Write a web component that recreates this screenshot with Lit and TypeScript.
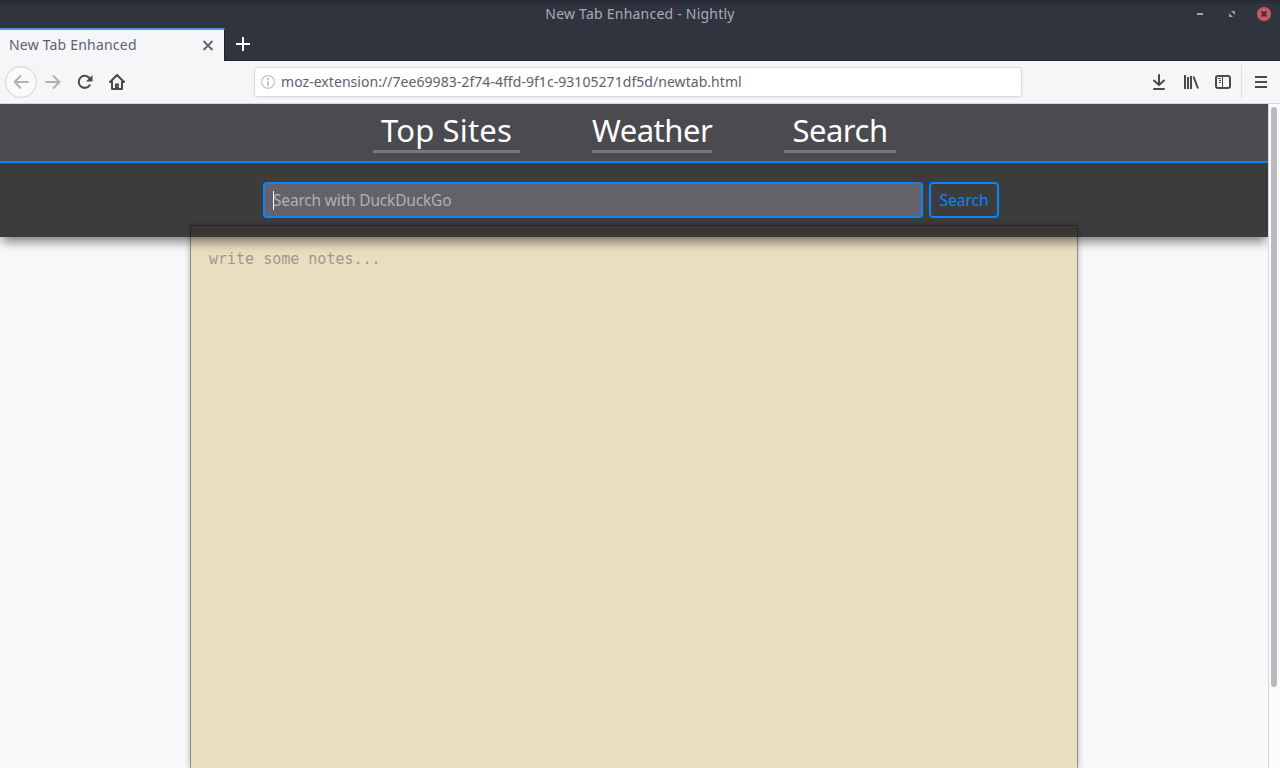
import { LitElement, html, css } from "lit";
import { customElement } from "lit/decorators.js";

@customElement("browser-chrome")
class BrowserChrome extends LitElement {
  static styles = css`
    :host { display: block; height: 104px; flex: none; font-family: "Noto Sans", sans-serif; font-size: 14px; color: #5c616c; }
    * { box-sizing: border-box; }
    svg { display: block; flex: none; }
    .frame { height: 61px; background: linear-gradient(#262934, #2f343f 5px); border-bottom: 1px solid #22252e; display: flex; flex-direction: column; }
    .title { height: 28px; display: grid; grid-template-columns: 1fr auto 1fr; align-items: center; color: #a6adba; flex: none; }
    .title .name { grid-column: 2; letter-spacing: 0.22px; line-height: 28px; }
    .controls { display: flex; justify-content: flex-end; gap: 16px; padding-right: 8px; }
    .tabs { display: flex; height: 33px; }
    .tab { width: 225px; height: 33px; border-top: 2px solid #5294e2; border-right: 1px solid #22252e; background: #f5f6f8; display: flex; align-items: center; padding: 0 8px 0 9px; }
    .tab .label { flex: 1; letter-spacing: 0.2px; padding-bottom: 2px; }
    .plus { padding: 8px 10px; }
    .bar { height: 43px; background: #f5f6f8; border-bottom: 1px solid #d4d6da; display: flex; align-items: center; padding-left: 5px; }
    .back { width: 32px; height: 32px; border: 1px solid #d2d3d5; border-radius: 50%; background: #fafafa; padding: 7px; }
    .nav-icons { display: flex; gap: 16px; padding-left: 8px; }
    .url { margin-left: 129px; width: 768px; height: 30px; border: 1px solid #d8dbe1; border-radius: 3px; background: #fff; box-shadow: 0 1px 3px rgba(0,0,0,.06); display: flex; align-items: center; gap: 6px; padding-left: 6px; white-space: nowrap; }
    .url .text { letter-spacing: 0.05px; padding-bottom: 2px; }
    .tools { margin-left: auto; display: flex; gap: 16px; padding-right: 10px; }
    .sep { width: 1px; height: 34px; background: #dcdee1; margin-right: 11px; }
    .menu { margin-right: 11px; width: 16px; }
  `;
  render() {
    return html`
      <div class="frame">
        <div class="title">
          <span class="name">New Tab Enhanced - Nightly</span>
          <div class="controls">
            <svg width="16" height="16"><path d="M5 7h6v2H5z" fill="#a0a5b0"/></svg>
            <svg width="16" height="16"><path d="M7 5h4v4zM5 7l4 4H5z" fill="#a0a5b0"/></svg>
            <svg width="16" height="16"><circle cx="8" cy="8" r="7" fill="#cc575d"/><path d="M5.500 5.500l5 5m0-5l-5 5" stroke="#2f343f" stroke-width="2"/></svg>
          </div>
        </div>
        <div class="tabs">
          <div class="tab"><span class="label">New Tab Enhanced</span>
            <svg width="16" height="16"><path d="M3.500 3l9 9m0-9l-9 9" stroke="#5c616c" stroke-width="1.800"/></svg>
          </div>
          <svg class="plus" width="36" height="32" viewBox="0 0 16 16"><path d="M7 1h2v6h6v2H9v6H7V9H1V7h6z" fill="#fff"/></svg>
        </div>
      </div>
      <div class="bar">
        <div class="back"><svg width="16" height="16" fill="none" stroke="#b0b1b3" stroke-width="2" stroke-linecap="round" stroke-linejoin="round"><path d="M15 8H1.500M7.500 2l-6 6 6 6"/></svg></div>
        <div class="nav-icons">
          <svg width="16" height="16" fill="none" stroke="#b0b1b3" stroke-width="2" stroke-linecap="round" stroke-linejoin="round"><path d="M1 8h13.500M8.500 2l6 6-6 6"/></svg>
          <svg width="16" height="16"><path d="M12.700 11.200A6 6 0 1 1 12.300 4" fill="none" stroke="#4a4a4a" stroke-width="2" stroke-linecap="round"/><path d="M15.500 1v6.500H9z" fill="#4a4a4a"/></svg>
          <svg width="16" height="16"><path d="M1 8l7-7 7 7M3 7.500V15h10V7.500" fill="none" stroke="#4a4a4a" stroke-width="2" stroke-linecap="round" stroke-linejoin="round"/><path d="M6 9.500h4V15H6z" fill="#4a4a4a"/><path d="M8.300 11.500h1v1h-1z" fill="#f5f6f8"/></svg>
        </div>
        <div class="url">
          <svg width="14" height="14"><circle cx="7" cy="7" r="6.400" fill="none" stroke="#c4c5c8" stroke-width="1.200"/><path d="M6 3h2v2H6zM6 6h2v5H6z" fill="#c4c5c8"/></svg>
          <span class="text">moz-extension://7ee69983-2f74-4ffd-9f1c-93105271df5d/newtab.html</span>
        </div>
        <div class="tools">
          <svg width="16" height="16" fill="none" stroke="#4a4a4a" stroke-width="2" stroke-linecap="round" stroke-linejoin="round"><path d="M8 1v9.500M3 6.500L8 11l5-4.500M3 15h10"/></svg>
          <svg width="16" height="16" fill="none" stroke="#4a4a4a" stroke-width="2"><path d="M2 1v14M5 3v12M8 2v13M10.500 2.500L15 14.500"/></svg>
          <svg width="16" height="16" fill="none" stroke="#4a4a4a"><rect x="1" y="2" width="14" height="12" rx="2" stroke-width="2"/><path d="M7.500 2v12M3 4.500h3M4 6.500h2M4 8.500h2"/></svg>
        </div>
        <div class="sep"></div>
        <svg width="16" height="16" class="menu"><path d="M2 3h12M2 8h12M2 13h12" stroke="#4a4a4a" stroke-width="2"/></svg>
      </div>`;
  }
}

@customElement("new-tab-page")
class NewTabPage extends LitElement {
  static styles = css`
    :host { display: flex; flex: 1; min-height: 0; overflow: hidden; font-family: "Noto Sans", sans-serif; background: #f9f9fa; }
    * { box-sizing: border-box; }
    .page { flex: 1; overflow: hidden; display: flex; flex-direction: column; }
    .nav { position: relative; z-index: 2; height: 59px; flex: none; background: #4a4a4f; border-bottom: 2px solid #0a84ff; display: flex; justify-content: center; gap: 72px; padding: 5px 0 0 1px; }
    .link { height: 44px; border-bottom: 3px solid #78787a; color: #fff; font-size: 31px; line-height: 42px; text-align: center; white-space: nowrap; }
    .top { width: 147px; letter-spacing: 0.15px; }
    .weather { width: 120px; letter-spacing: -0.5px; }
    .find { width: 112px; letter-spacing: -0.5px; }
    .panel { position: relative; z-index: 1; height: 74px; flex: none; background: rgba(12,12,13,.8); box-shadow: 0 7px 10px -2px rgba(12,12,13,.5); display: flex; gap: 6px; padding: 19px 0 0 263px; font-size: 15.500px; letter-spacing: -0.18px; }
    .query { width: 660px; height: 36px; border: 2px solid #0a84ff; border-radius: 4px; background: #646268; color: #b1b1b3; display: flex; align-items: center; padding-left: 8px; }
    .caret { width: 1px; height: 19px; background: #fff; margin-right: -1px; }
    .go { width: 70px; height: 36px; border: 2px solid #0a84ff; border-radius: 4px; color: #0a84ff; line-height: 32px; text-align: center; letter-spacing: 0; }
    .notes { width: 888px; margin: -12px 0 0 190px; flex: 1; border: 1px solid #8f8f87; border-bottom: 0; background: #eadec1; box-shadow: 0 0 6px rgba(12,12,13,.3); padding: 23px 18px; color: #9d998b; font: 15px/20px "DejaVu Sans Mono", monospace; }
    .scroll { width: 12px; border-left: 1px solid #d7d8df; background: #fcfcfc; padding: 3px 3px 0 2px; }
    .thumb { width: 6px; height: 580px; border-radius: 3px; background: #b8babf; }
  `;
  render() {
    return html`
      <div class="page">
        <div class="nav">
          <div class="link top">Top Sites</div>
          <div class="link weather">Weather</div>
          <div class="link find">Search</div>
        </div>
        <div class="panel">
          <div class="query"><span class="caret"></span><span>Search with DuckDuckGo</span></div>
          <div class="go">Search</div>
        </div>
        <div class="notes">write some notes...</div>
      </div>
      <div class="scroll"><div class="thumb"></div></div>`;
  }
}

@customElement("app-root")
class AppRoot extends LitElement {
  static styles = css`
    :host { display: flex; flex-direction: column; width: 1280px; height: 768px; overflow: hidden; }
  `;
  render() {
    return html`<browser-chrome></browser-chrome><new-tab-page></new-tab-page>`;
  }
}
